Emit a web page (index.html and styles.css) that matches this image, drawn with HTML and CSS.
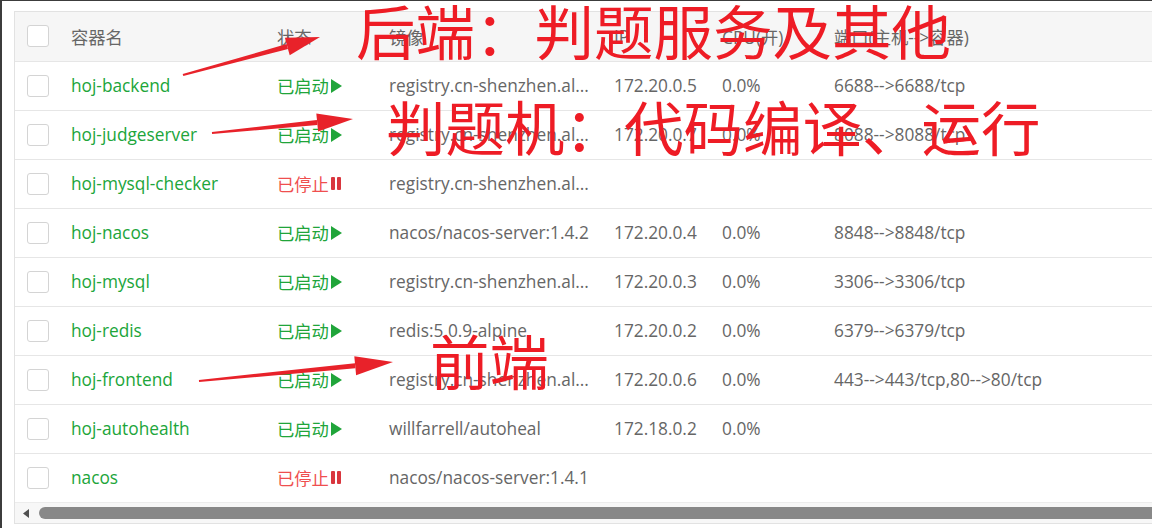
FILE: index.html
```html
<!DOCTYPE html>
<html lang="zh">
<head>
<meta charset="utf-8">
<title>容器列表</title>
<link rel="stylesheet" href="styles.css">
</head>
<body>
<div class="frame">
  <div class="panel">
    <div class="table-wrap">
      <table class="grid">
        <colgroup>
          <col class="c-check"><col class="c-name"><col class="c-status"><col class="c-image"><col class="c-ip"><col class="c-cpu"><col class="c-port"><col class="c-rest">
        </colgroup>
        <thead>
          <tr>
            <th><span class="cb"></span></th>
            <th>容器名</th>
            <th>状态</th>
            <th>镜像</th>
            <th>IP</th>
            <th>CPU(开)</th>
            <th>端口(主机-->容器)</th>
            <th></th>
          </tr>
        </thead>
        <tbody>
          <tr>
            <td><span class="cb"></span></td>
            <td class="name">hoj-backend</td>
            <td><span class="st on">已启动<svg class="ico" width="11" height="14" viewBox="0 0 11 14"><path d="M0 0 L11 7 L0 14 Z"/></svg></span></td>
            <td>registry.cn-shenzhen.al...</td>
            <td>172.20.0.5</td>
            <td>0.0%</td>
            <td>6688-->6688/tcp</td>
            <td></td>
          </tr>
          <tr>
            <td><span class="cb"></span></td>
            <td class="name">hoj-judgeserver</td>
            <td><span class="st on">已启动<svg class="ico" width="11" height="14" viewBox="0 0 11 14"><path d="M0 0 L11 7 L0 14 Z"/></svg></span></td>
            <td>registry.cn-shenzhen.al...</td>
            <td>172.20.0.7</td>
            <td>0.0%</td>
            <td>8088-->8088/tcp</td>
            <td></td>
          </tr>
          <tr>
            <td><span class="cb"></span></td>
            <td class="name">hoj-mysql-checker</td>
            <td><span class="st off">已停止<svg class="ico" width="10" height="13" viewBox="0 0 10 13"><rect x="0" y="0" width="4" height="13" rx="1"/><rect x="6" y="0" width="4" height="13" rx="1"/></svg></span></td>
            <td>registry.cn-shenzhen.al...</td>
            <td></td>
            <td></td>
            <td></td>
            <td></td>
          </tr>
          <tr>
            <td><span class="cb"></span></td>
            <td class="name">hoj-nacos</td>
            <td><span class="st on">已启动<svg class="ico" width="11" height="14" viewBox="0 0 11 14"><path d="M0 0 L11 7 L0 14 Z"/></svg></span></td>
            <td>nacos/nacos-server:1.4.2</td>
            <td>172.20.0.4</td>
            <td>0.0%</td>
            <td>8848-->8848/tcp</td>
            <td></td>
          </tr>
          <tr>
            <td><span class="cb"></span></td>
            <td class="name">hoj-mysql</td>
            <td><span class="st on">已启动<svg class="ico" width="11" height="14" viewBox="0 0 11 14"><path d="M0 0 L11 7 L0 14 Z"/></svg></span></td>
            <td>registry.cn-shenzhen.al...</td>
            <td>172.20.0.3</td>
            <td>0.0%</td>
            <td>3306-->3306/tcp</td>
            <td></td>
          </tr>
          <tr>
            <td><span class="cb"></span></td>
            <td class="name">hoj-redis</td>
            <td><span class="st on">已启动<svg class="ico" width="11" height="14" viewBox="0 0 11 14"><path d="M0 0 L11 7 L0 14 Z"/></svg></span></td>
            <td>redis:5.0.9-alpine</td>
            <td>172.20.0.2</td>
            <td>0.0%</td>
            <td>6379-->6379/tcp</td>
            <td></td>
          </tr>
          <tr>
            <td><span class="cb"></span></td>
            <td class="name">hoj-frontend</td>
            <td><span class="st on">已启动<svg class="ico" width="11" height="14" viewBox="0 0 11 14"><path d="M0 0 L11 7 L0 14 Z"/></svg></span></td>
            <td>registry.cn-shenzhen.al...</td>
            <td>172.20.0.6</td>
            <td>0.0%</td>
            <td>443-->443/tcp,80-->80/tcp</td>
            <td></td>
          </tr>
          <tr>
            <td><span class="cb"></span></td>
            <td class="name">hoj-autohealth</td>
            <td><span class="st on">已启动<svg class="ico" width="11" height="14" viewBox="0 0 11 14"><path d="M0 0 L11 7 L0 14 Z"/></svg></span></td>
            <td>willfarrell/autoheal</td>
            <td>172.18.0.2</td>
            <td>0.0%</td>
            <td></td>
            <td></td>
          </tr>
          <tr>
            <td><span class="cb"></span></td>
            <td class="name">nacos</td>
            <td><span class="st off">已停止<svg class="ico" width="10" height="13" viewBox="0 0 10 13"><rect x="0" y="0" width="4" height="13" rx="1"/><rect x="6" y="0" width="4" height="13" rx="1"/></svg></span></td>
            <td>nacos/nacos-server:1.4.1</td>
            <td></td>
            <td></td>
            <td></td>
            <td></td>
          </tr>
        </tbody>
      </table>
    </div>
    <div class="hscroll">
      <svg class="sc-arrow" width="6" height="9" viewBox="0 0 6 9"><path d="M6 0 L0 4.5 L6 9 Z"/></svg>
      <div class="sc-thumb"></div>
    </div>
  </div>
</div>

<div class="note note-1">后端：判题服务及其他</div>
<div class="note note-2">判题机：代码编译、运行</div>
<div class="note note-3">前端</div>

<svg class="arrows" width="1152" height="528" viewBox="0 0 1152 528">
  <g fill="#e8222a">
    <polygon points="183.3,76 182.7,74 286.6,44.1 288,48.9"/>
    <polygon points="320,37 284.9,37.8 289.7,55.2"/>
    <polygon points="212.1,134 211.9,132 316.9,120.1 317.4,125.1"/>
    <polygon points="353,119 316.3,113.6 318.1,131.5"/>
    <polygon points="199.1,382 198.9,380 355,363.2 355.4,368.2"/>
    <polygon points="393,362 354.3,356.2 356.1,375.2"/>
  </g>
</svg>
</body>
</html>
```

FILE: styles.css
```css
html, body {
  margin: 0;
  padding: 0;
}
body {
  width: 1152px;
  height: 528px;
  overflow: hidden;
  background: #ffffff;
  font-family: "Open Sans", "Noto Sans CJK SC", sans-serif;
  position: relative;
}
.frame {
  box-sizing: border-box;
  height: 528px;
  border-left: 2px solid #3c3c3c;
  border-top: 1px solid #3c3c3c;
  padding: 10px 0 0 12px;
}
.panel {
  border: 1px solid #e2e2e2;
  border-right: none;
  overflow: hidden;
}
.table-wrap {
  overflow: hidden;
}
.grid {
  border-collapse: collapse;
  table-layout: fixed;
  width: 1500px;
  font-size: 17.3px;
  color: #666666;
}
.c-check { width: 43px; }
.c-name { width: 206px; }
.c-status { width: 112px; }
.c-image { width: 225px; }
.c-ip { width: 108px; }
.c-cpu { width: 112px; }
.c-port { width: 320px; }
.c-rest { width: 374px; }
.grid th, .grid td {
  height: 49px;
  padding: 0 0 0 13px;
  text-align: left;
  white-space: nowrap;
  overflow: hidden;
  box-sizing: border-box;
}
.grid th {
  background: #f6f6f6;
  font-weight: normal;
  color: #666666;
  border-bottom: 1px solid #e6e6e6;
}
.grid td {
  border-bottom: 1px solid #e6e6e6;
  color: #666666;
}
.grid th:first-child, .grid td:first-child {
  padding-left: 12px;
}
.grid tbody tr:last-child td {
  border-bottom: none;
}
.cb {
  display: block;
  width: 20px;
  height: 20px;
  border: 1px solid #d4d4d4;
  border-radius: 3px;
  background: #ffffff;
}
.name {
  color: #20a53a !important;
}
.st {
  display: inline-flex;
  align-items: center;
  gap: 2px;
}
.st.on { color: #20a53a; }
.st.on .ico { fill: #20a53a; }
.st.off { color: #ef4f4f; }
.st.off .ico { fill: #d9363e; }
.hscroll {
  height: 20px;
  display: flex;
  align-items: center;
  gap: 10px;
  padding-left: 8px;
  background: #f7f7f7;
  border-top: 1px solid #ececec;
}
.sc-arrow {
  fill: #505050;
  flex: none;
}
.sc-thumb {
  flex: 1;
  height: 12px;
  background: #888888;
  border-radius: 6px 0 0 6px;
}
.note {
  position: absolute;
  font-family: "Noto Sans CJK SC", sans-serif;
  font-size: 59.5px;
  line-height: 1;
  color: #ee1c25;
  white-space: nowrap;
}
.note-1 { left: 356px; top: 0px; }
.note-2 { left: 386px; top: 96px; }
.note-3 { left: 430px; top: 330px; }
.arrows {
  position: absolute;
  left: 0;
  top: 0;
  pointer-events: none;
}
```
